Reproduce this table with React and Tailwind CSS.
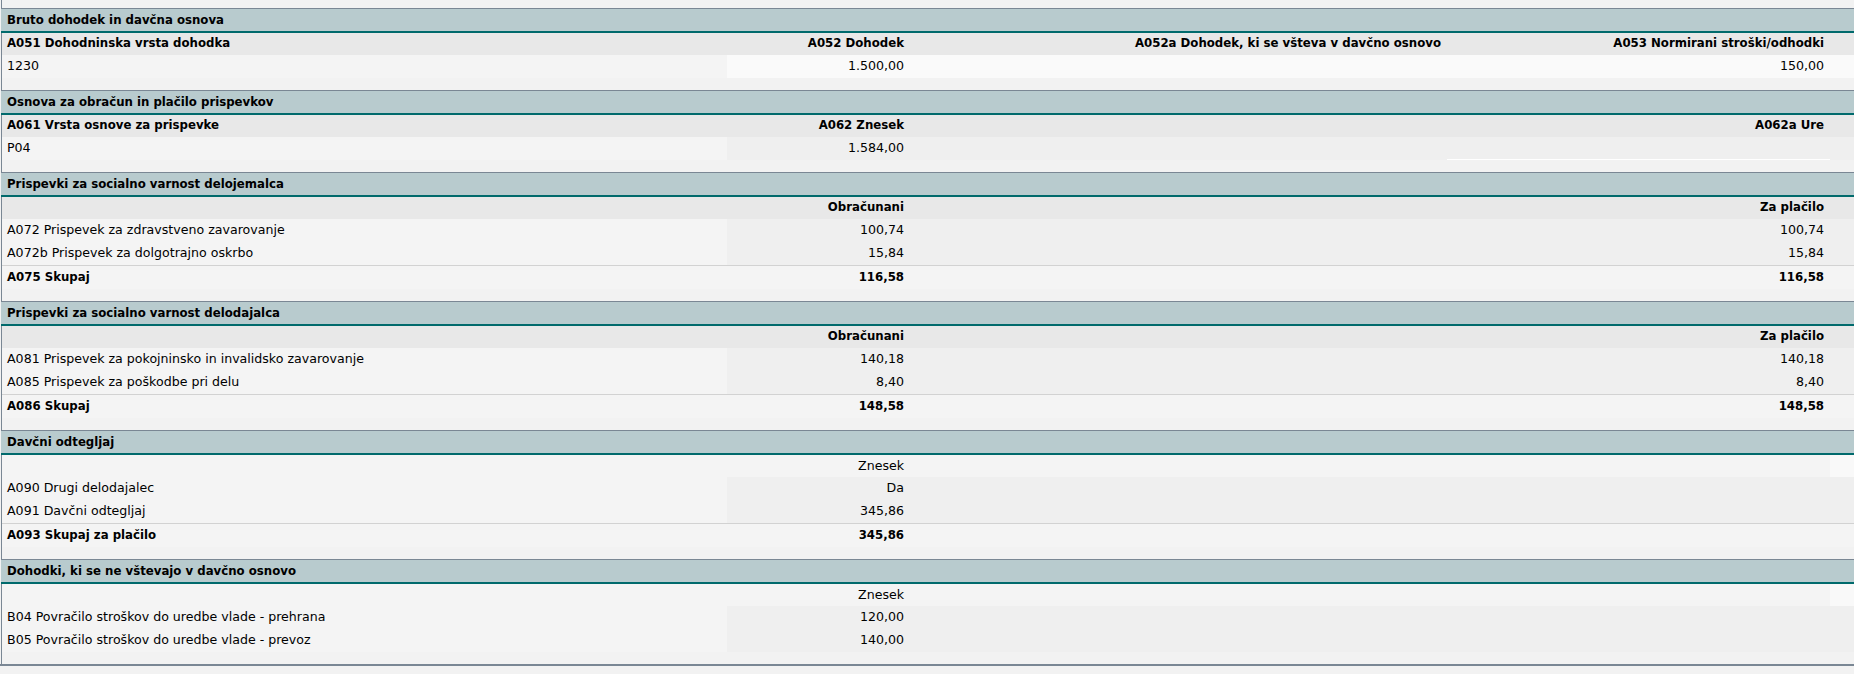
const cols = "grid grid-cols-[725px_183px_537px_383px_1fr]";

const Section = ({ title, children }) => (
  <div className="pb-[12px]">
    <div className="-ml-px h-[25px] border-t border-b-2 border-t-[#7a8794] border-b-[#006a6c] bg-[#b8cbce] pl-[6px] text-[11.75px] font-bold leading-[22px] text-black">
      {title}
    </div>
    {children}
  </div>
);

const HeadRow = ({ cells, light }) => (
  <div
    className={`${cols} h-[22px] items-center ${
      light
        ? "bg-[#f4f4f4] text-[12.6px] font-normal"
        : "bg-[#e8e8e8] text-[11.75px] font-bold"
    }`}
  >
    <div className="pl-[5px]">{cells[0]}</div>
    <div className="pr-[6px] text-right">{cells[1]}</div>
    <div className="pr-[6px] text-right">{cells[2]}</div>
    <div className="pr-[6px] text-right">{cells[3]}</div>
    <div className={`h-full ${light ? "bg-[#f9f9f9]" : ""}`}></div>
  </div>
);

const Row = ({ cells, white, sum, ure }) => {
  const bg = white ? "bg-[#fafafa]" : sum ? "bg-[#f4f4f4]" : "bg-[#efefef]";
  return (
    <div
      className={`${cols} ${
        sum
          ? "h-[24px] border-t border-[#d2d2d2] text-[11.75px] font-bold"
          : "h-[23px] text-[12.6px]"
      }`}
    >
      <div className="flex items-center bg-[#f4f4f4] pl-[5px]">{cells[0]}</div>
      <div className={`flex items-center justify-end pr-[6px] ${bg}`}>
        {cells[1]}
      </div>
      <div className={`flex items-center justify-end pr-[6px] ${bg}`}>
        {cells[2]}
      </div>
      <div
        className={`flex items-center justify-end pr-[6px] ${bg} ${
          ure ? "border-b border-white" : ""
        }`}
      >
        {cells[3]}
      </div>
      <div className={bg}></div>
    </div>
  );
};

export default function App() {
  return (
    <div className="h-[674px] w-full overflow-hidden bg-[#f2f2f2] font-['DejaVu_Sans',sans-serif] text-black">
      <div className="ml-px border-l border-[#7a8794] pt-[8px]">
        <Section title="Bruto dohodek in davčna osnova">
          <HeadRow
            cells={[
              "A051 Dohodninska vrsta dohodka",
              "A052 Dohodek",
              "A052a Dohodek, ki se všteva v davčno osnovo",
              "A053 Normirani stroški/odhodki",
            ]}
          />
          <Row cells={["1230", "1.500,00", "", "150,00"]} white />
        </Section>

        <Section title="Osnova za obračun in plačilo prispevkov">
          <HeadRow
            cells={["A061 Vrsta osnove za prispevke", "A062 Znesek", "", "A062a Ure"]}
          />
          <Row cells={["P04", "1.584,00", "", ""]} ure />
        </Section>

        <Section title="Prispevki za socialno varnost delojemalca">
          <HeadRow cells={["", "Obračunani", "", "Za plačilo"]} />
          <Row cells={["A072 Prispevek za zdravstveno zavarovanje", "100,74", "", "100,74"]} />
          <Row cells={["A072b Prispevek za dolgotrajno oskrbo", "15,84", "", "15,84"]} />
          <Row cells={["A075 Skupaj", "116,58", "", "116,58"]} sum />
        </Section>

        <Section title="Prispevki za socialno varnost delodajalca">
          <HeadRow cells={["", "Obračunani", "", "Za plačilo"]} />
          <Row
            cells={["A081 Prispevek za pokojninsko in invalidsko zavarovanje", "140,18", "", "140,18"]}
          />
          <Row cells={["A085 Prispevek za poškodbe pri delu", "8,40", "", "8,40"]} />
          <Row cells={["A086 Skupaj", "148,58", "", "148,58"]} sum />
        </Section>

        <Section title="Davčni odtegljaj">
          <HeadRow cells={["", "Znesek", "", ""]} light />
          <Row cells={["A090 Drugi delodajalec", "Da", "", ""]} />
          <Row cells={["A091 Davčni odtegljaj", "345,86", "", ""]} />
          <Row cells={["A093 Skupaj za plačilo", "345,86", "", ""]} sum />
        </Section>

        <Section title="Dohodki, ki se ne vštevajo v davčno osnovo">
          <HeadRow cells={["", "Znesek", "", ""]} light />
          <Row cells={["B04 Povračilo stroškov do uredbe vlade - prehrana", "120,00", "", ""]} />
          <Row cells={["B05 Povračilo stroškov do uredbe vlade - prevoz", "140,00", "", ""]} />
        </Section>
      </div>
      <div className="h-[2px] bg-[#7a8794]"></div>
    </div>
  );
}
